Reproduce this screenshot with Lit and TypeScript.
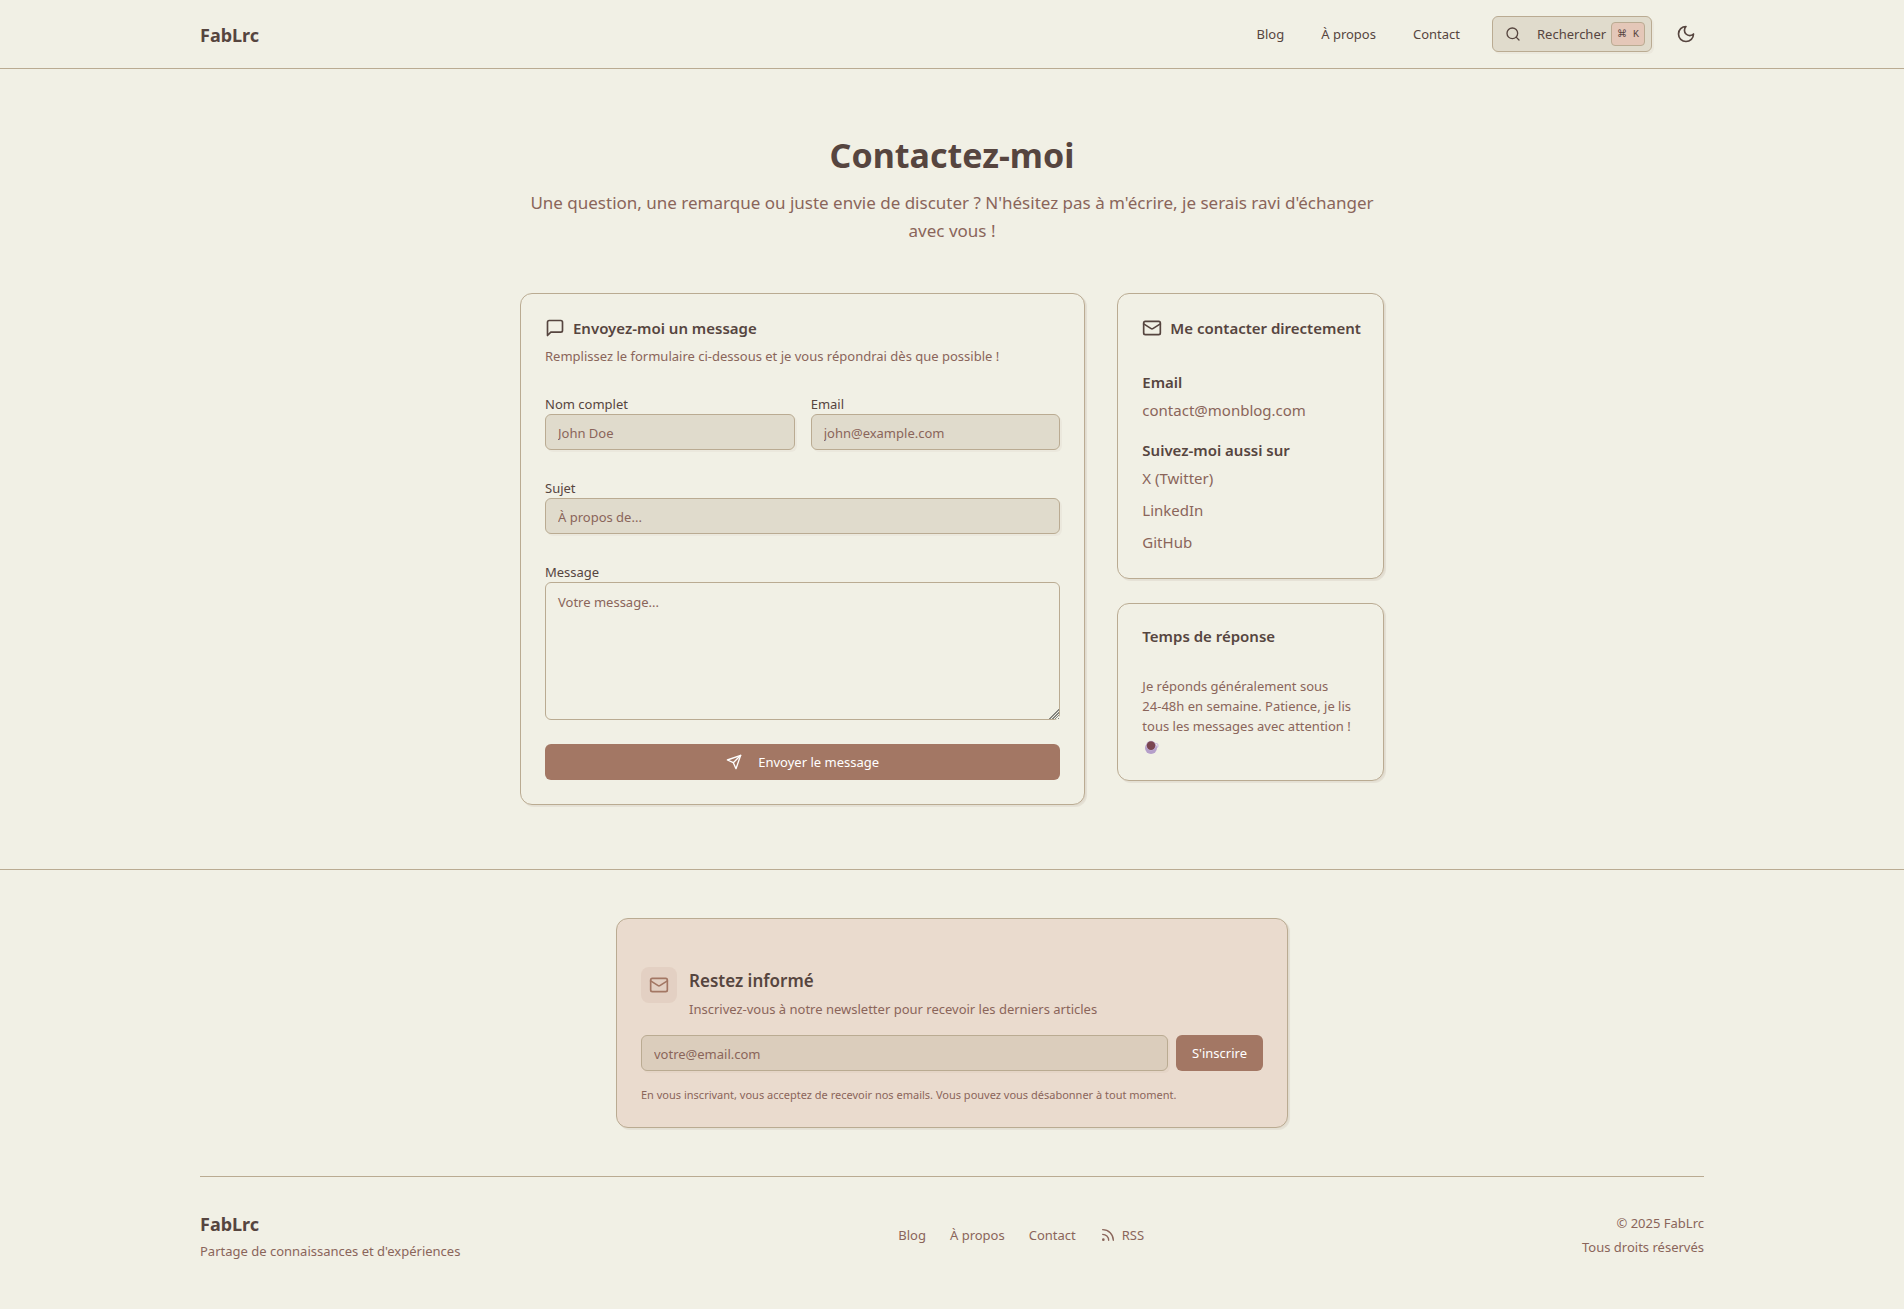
import { LitElement, html, css, svg } from "lit";
import { customElement, property, state } from "lit/decorators.js";

const ICONS = {
  search: svg`<circle cx="11" cy="11" r="8"/><path d="m21 21-4.3-4.3"/>`,
  moon: svg`<path d="M12 3a6 6 0 0 0 9 9 9 9 0 1 1-9-9Z"/>`,
  message: svg`<path d="M21 15a2 2 0 0 1-2 2H7l-4 4V5a2 2 0 0 1 2-2h14a2 2 0 0 1 2 2z"/>`,
  mail: svg`<rect width="20" height="16" x="2" y="4" rx="2"/><path d="m22 7-8.97 5.7a1.94 1.94 0 0 1-2.06 0L2 7"/>`,
  send: svg`<path d="m22 2-7 20-4-9-9-4Z"/><path d="M22 2 11 13"/>`,
  rss: svg`<path d="M4 11a9 9 0 0 1 9 9"/><path d="M4 4a16 16 0 0 1 16 16"/><circle cx="5" cy="19" r="1"/>`,
};

@customElement("ui-icon")
export class UiIcon extends LitElement {
  @property() name: keyof typeof ICONS = "mail";

  static styles = css`
    :host {
      display: inline-flex;
      flex: none;
      width: 20px;
      height: 20px;
    }
    .glyph {
      width: 100%;
      height: 100%;
      fill: none;
      stroke: currentColor;
      stroke-width: 2;
      stroke-linecap: round;
      stroke-linejoin: round;
    }
  `;

  render() {
    return html`<svg class="glyph" viewBox="0 0 24 24" aria-hidden="true">${ICONS[this.name]}</svg>`;
  }
}

const PAGES = [
  { label: "Blog", href: "#blog" },
  { label: "À propos", href: "#a-propos" },
  { label: "Contact", href: "#contact" },
];

const SOCIALS = [
  { label: "X (Twitter)", href: "#x" },
  { label: "LinkedIn", href: "#linkedin" },
  { label: "GitHub", href: "#github" },
];

@customElement("app-root")
export class AppRoot extends LitElement {
  @state() private sent = false;

  static styles = css`
    :host {
      --background: #f1f0e5;
      --foreground: #56453f;
      --primary: #a37764;
      --muted: #8a655a;
      --border: #baab92;
      --accent: #e4c7b8;
      --field: rgb(186 171 146 / 0.3);
      --shadow-xs: 2px 2px 0 0 hsl(20 18% 51% / 0.06);
      --shadow-sm: 2px 2px 0 0 hsl(20 18% 51% / 0.11), 2px 1px 2px -1px hsl(20 18% 51% / 0.11);
      display: block;
      min-height: 100vh;
      background: var(--background);
      color: var(--foreground);
      font-family: "Segoe UI", "Noto Sans", sans-serif;
      font-size: 13px;
      line-height: 20px;
    }
    *,
    *::before,
    *::after {
      box-sizing: border-box;
    }
    h1, h2, h3, p, ul {
      margin: 0;
      padding: 0;
    }
    ul {
      list-style: none;
    }
    a {
      color: inherit;
      text-decoration: none;
    }
    button, input, textarea {
      font: inherit;
      color: inherit;
      margin: 0;
    }
    button {
      cursor: pointer;
    }
    .container {
      max-width: 1536px;
      margin: 0 auto;
      padding: 0 16px;
    }
    .icon-sm {
      width: 16px;
      height: 16px;
    }
    .muted {
      color: var(--muted);
    }

    .site-header {
      border-bottom: 1px solid var(--border);
    }
    .header-row {
      display: flex;
      align-items: center;
      justify-content: space-between;
      padding-top: 16px;
      padding-bottom: 16px;
    }
    .brand {
      display: block;
      padding-top: 2px;
      font-size: 18px;
      font-weight: 700;
      line-height: 26px;
    }
    .header-right {
      display: flex;
      align-items: center;
      gap: 16px;
    }
    .nav {
      display: flex;
      gap: 37px;
      margin-right: 16px;
    }
    .search {
      display: flex;
      align-items: center;
      gap: 16px;
      width: 160px;
      height: 36px;
      padding: 0 6px 0 12px;
      border: 1px solid var(--border);
      border-radius: 6px;
      background: var(--field);
      box-shadow: var(--shadow-xs);
    }
    .kbd {
      display: flex;
      align-items: center;
      justify-content: center;
      width: 34px;
      height: 24px;
      margin-left: auto;
      padding-top: 2px;
      border: 1px solid var(--border);
      border-radius: 4px;
      background: var(--accent);
      font-family: "Liberation Mono", "DejaVu Sans", monospace;
      font-size: 10px;
      white-space: nowrap;
    }
    .search-label {
      margin-right: -12px;
    }
    .theme {
      display: flex;
      align-items: center;
      justify-content: center;
      width: 36px;
      height: 36px;
      padding: 0;
      border: 0;
      border-radius: 6px;
      background: transparent;
    }

    .main {
      max-width: 896px;
      margin: 0 auto;
      padding: 64px 16px;
    }
    .intro {
      margin-bottom: 48px;
      text-align: center;
    }
    .intro-title {
      margin-bottom: 12px;
      font-size: 34px;
      font-weight: 700;
      line-height: 44px;
    }
    .intro-text {
      font-size: 17px;
      line-height: 28px;
      color: var(--muted);
    }
    .columns {
      display: grid;
      grid-template-columns: repeat(3, minmax(0, 1fr));
      align-items: start;
      gap: 32px;
    }
    .side {
      display: grid;
      grid-template-columns: minmax(0, 1fr);
      gap: 24px;
    }
    .card {
      padding: 24px;
      border: 1px solid var(--border);
      border-radius: 12px;
      background: var(--background);
      box-shadow: var(--shadow-sm);
    }
    .form-card {
      grid-column: span 2;
    }
    .card-title {
      display: flex;
      align-items: center;
      gap: 8px;
      font-size: 15px;
      font-weight: 600;
      line-height: 16px;
      white-space: nowrap;
    }
    .card-text {
      margin-top: 8px;
      color: var(--muted);
    }
    .form {
      display: grid;
      gap: 24px;
      margin-top: 24px;
    }
    .pair {
      display: grid;
      grid-template-columns: 1fr 1fr;
      gap: 16px;
    }
    .field {
      display: grid;
      justify-items: start;
    }
    .label {
      padding-top: 4px;
    }
    .input {
      width: 100%;
      min-width: 0;
      height: 36px;
      padding: 6px 12px 4px;
      border: 1px solid var(--border);
      border-radius: 6px;
      background: var(--field);
      box-shadow: var(--shadow-xs);
    }
    .textarea {
      display: block;
      width: 100%;
      padding: 9px 12px 7px;
      border: 1px solid var(--border);
      border-radius: 6px;
      background: transparent;
      resize: vertical;
    }
    .textarea::-webkit-resizer {
      background:
        linear-gradient(135deg, var(--background) 66%, transparent 66%),
        repeating-linear-gradient(135deg, #85857f 0 1px, var(--background) 1px 2px);
    }
    .input::placeholder,
    .textarea::placeholder {
      color: var(--muted);
      opacity: 1;
    }
    .button {
      display: flex;
      align-items: center;
      justify-content: center;
      gap: 16px;
      height: 36px;
      padding: 0 16px;
      border: 0;
      border-radius: 6px;
      background: var(--primary);
      color: #fff;
    }

    .details {
      display: grid;
      gap: 16px;
      margin-top: 32px;
      font-size: 15px;
      line-height: 24px;
    }
    .details-title {
      margin-bottom: 4px;
      font-size: 15px;
      font-weight: 600;
    }
    .socials {
      display: grid;
      gap: 8px;
    }
    .delay {
      margin-top: 32px;
      color: var(--muted);
    }
    .keep {
      white-space: nowrap;
    }
    .coffee {
      display: inline-block;
      width: 18px;
      height: 16px;
      vertical-align: -4px;
    }

    .site-footer {
      border-top: 1px solid var(--border);
      padding: 48px 0;
    }
    .newsletter {
      max-width: 672px;
      margin: 0 auto 48px;
      padding-top: 48px;
      background: #eadbce;
    }
    .newsletter-head {
      display: flex;
      align-items: flex-start;
      gap: 12px;
    }
    .badge {
      display: flex;
      padding: 8px;
      border-radius: 8px;
      background: rgb(163 119 100 / 0.1);
      color: var(--primary);
    }
    .newsletter-title {
      margin-bottom: 4px;
      font-size: 17px;
      font-weight: 600;
      line-height: 28px;
    }
    .subscribe {
      display: flex;
      gap: 8px;
      margin: 16px 0;
    }
    .legal {
      font-size: 11px;
      line-height: 16px;
      color: var(--muted);
    }
    .footer-row {
      display: flex;
      align-items: center;
      justify-content: space-between;
      padding-top: 32px;
      border-top: 1px solid var(--border);
    }
    .tagline {
      margin-top: 4px;
      color: var(--muted);
    }
    .footer-nav {
      display: flex;
      gap: 24px;
      color: var(--muted);
    }
    .rss {
      display: flex;
      align-items: center;
      gap: 6px;
    }
    .rights {
      text-align: right;
      line-height: 24px;
      color: var(--muted);
    }
  `;

  private submit(event: Event) {
    event.preventDefault();
    this.sent = true;
  }

  private field(id: string, label: string, placeholder: string, type = "text") {
    return html`
      <div class="field">
        <label class="label" for=${id}>${label}</label>
        <input class="input" id=${id} type=${type} placeholder=${placeholder} />
      </div>
    `;
  }

  private header() {
    return html`
      <header class="site-header">
        <div class="container header-row">
          <a class="brand" href="#accueil">FabLrc</a>
          <div class="header-right">
            <nav class="nav" aria-label="Navigation principale">
              ${PAGES.map((page) => html`<a href=${page.href}>${page.label}</a>`)}
            </nav>
            <button class="search" type="button">
              <ui-icon class="icon-sm" name="search"></ui-icon>
              <span class="search-label">Rechercher</span>
              <kbd class="kbd">⌘ K</kbd>
            </button>
            <button class="theme" type="button" aria-label="Changer de thème">
              <ui-icon name="moon"></ui-icon>
            </button>
          </div>
        </div>
      </header>
    `;
  }

  private contactForm() {
    return html`
      <section class="card form-card">
        <h2 class="card-title"><ui-icon name="message"></ui-icon>Envoyez-moi un message</h2>
        <p class="card-text">Remplissez le formulaire ci-dessous et je vous répondrai dès que possible !</p>
        <form class="form" @submit=${this.submit}>
          <div class="pair">
            ${this.field("name", "Nom complet", "John Doe")}
            ${this.field("email", "Email", "john@example.com", "email")}
          </div>
          ${this.field("subject", "Sujet", "À propos de...")}
          <div class="field">
            <label class="label" for="message">Message</label>
            <textarea class="textarea" id="message" rows="6" placeholder="Votre message..."></textarea>
          </div>
          <button class="button" type="submit" ?disabled=${this.sent}>
            <ui-icon class="icon-sm" name="send"></ui-icon>Envoyer le message
          </button>
        </form>
      </section>
    `;
  }

  private sidebar() {
    return html`
      <aside class="side">
        <section class="card">
          <h2 class="card-title"><ui-icon name="mail"></ui-icon>Me contacter directement</h2>
          <div class="details">
            <div>
              <h3 class="details-title">Email</h3>
              <a class="muted" href="mailto:contact@monblog.com">contact@monblog.com</a>
            </div>
            <div>
              <h3 class="details-title">Suivez-moi aussi sur</h3>
              <ul class="socials muted">
                ${SOCIALS.map((link) => html`<li><a href=${link.href}>${link.label}</a></li>`)}
              </ul>
            </div>
          </div>
        </section>
        <section class="card">
          <h2 class="card-title">Temps de réponse</h2>
          <p class="delay">
            Je réponds généralement sous <span class="keep">24-48h</span> en semaine. Patience, je lis
            tous les messages avec attention !
            <svg class="coffee" viewBox="0 0 18 16" role="img" aria-label="Café">
              <circle cx="14" cy="6.5" r="2" fill="none" stroke="#cdbcdc" stroke-width="1.2" />
              <circle cx="9" cy="9" r="6" fill="#b59fca" />
              <circle cx="9" cy="6.6" r="4.9" fill="#cbbadb" />
              <circle cx="9" cy="6.6" r="4.3" fill="#7a4550" />
            </svg>
          </p>
        </section>
      </aside>
    `;
  }

  private footer() {
    return html`
      <footer class="site-footer">
        <div class="container">
          <section class="card newsletter">
            <div class="newsletter-head">
              <span class="badge"><ui-icon name="mail"></ui-icon></span>
              <div>
                <h3 class="newsletter-title">Restez informé</h3>
                <p class="muted">Inscrivez-vous à notre newsletter pour recevoir les derniers articles</p>
              </div>
            </div>
            <form class="subscribe" @submit=${(e: Event) => e.preventDefault()}>
              <input class="input" type="email" aria-label="Adresse email" placeholder="votre@email.com" />
              <button class="button" type="submit">S'inscrire</button>
            </form>
            <p class="legal">
              En vous inscrivant, vous acceptez de recevoir nos emails. Vous pouvez vous désabonner à tout moment.
            </p>
          </section>
          <div class="footer-row">
            <div>
              <a class="brand" href="#accueil">FabLrc</a>
              <p class="tagline">Partage de connaissances et d'expériences</p>
            </div>
            <nav class="footer-nav" aria-label="Pied de page">
              ${PAGES.map((page) => html`<a href=${page.href}>${page.label}</a>`)}
              <a class="rss" href="#rss"><ui-icon class="icon-sm" name="rss"></ui-icon>RSS</a>
            </nav>
            <div class="rights">
              <p>© 2025 FabLrc</p>
              <p>Tous droits réservés</p>
            </div>
          </div>
        </div>
      </footer>
    `;
  }

  render() {
    return html`
      ${this.header()}
      <main class="main">
        <div class="intro">
          <h1 class="intro-title">Contactez-moi</h1>
          <p class="intro-text">
            Une question, une remarque ou juste envie de discuter ? N'hésitez pas à m'écrire, je serais ravi
            d'échanger avec vous !
          </p>
        </div>
        <div class="columns">${this.contactForm()} ${this.sidebar()}</div>
      </main>
      ${this.footer()}
    `;
  }
}
